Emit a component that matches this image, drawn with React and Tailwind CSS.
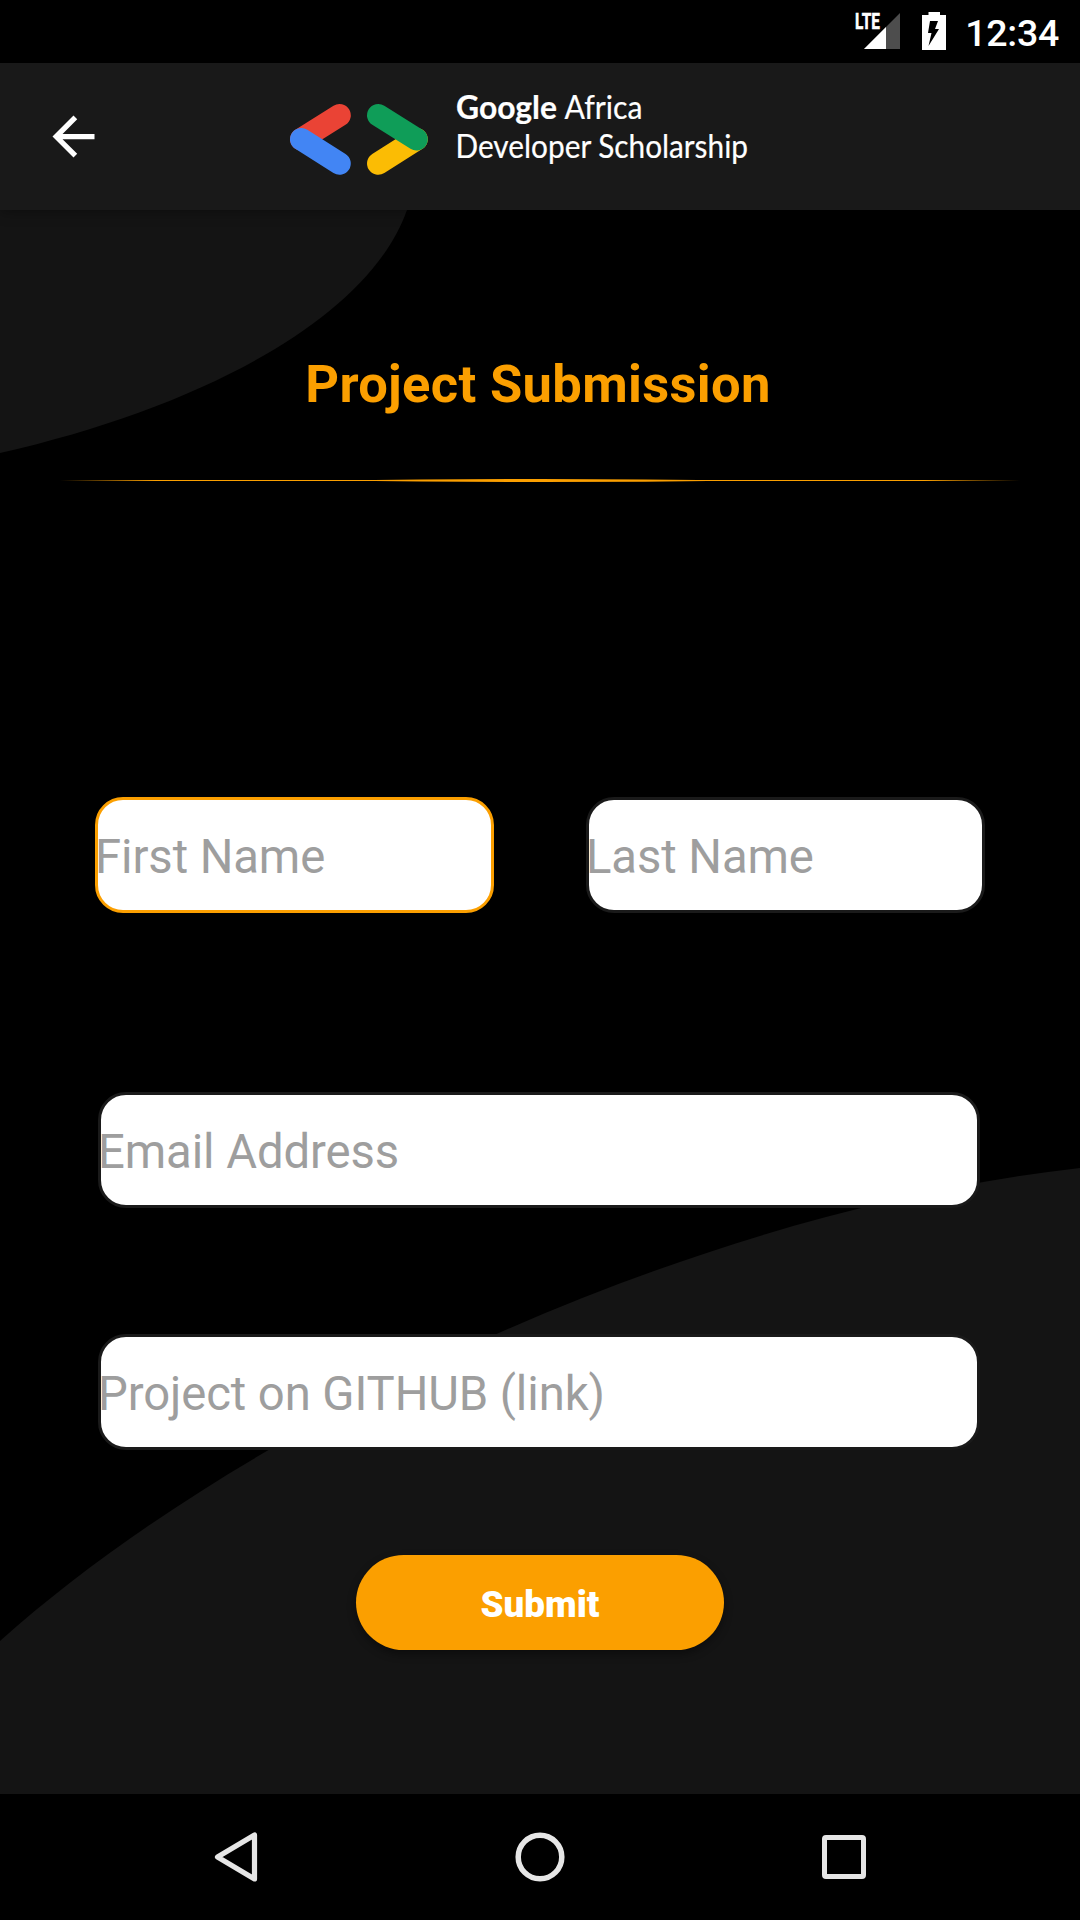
function StatusBar() {
  return (
    <div className="flex h-[63px] shrink-0 items-start justify-end bg-black pr-[21px] text-white">
      <svg className="mt-[8px] h-[45px] w-[52px]" viewBox="0 0 52 45">
        <text x="4" y="21" fontSize="22.500" fontWeight="800" fill="#fff" stroke="#fff" strokeWidth="0.300" fontFamily="Roboto, sans-serif" textLength="25" lengthAdjust="spacingAndGlyphs">LTE</text>
        <path d="M49 5V41H13Z" fill="#4d4d4d" />
        <path d="M35 19V41H13Z" fill="#fff" />
      </svg>
      <svg className="mt-[12px] ml-[19px] h-[38px] w-[24px]" viewBox="0 0 24 38">
        <path d="M6.500 0H18V3H24V38H0V3H6.500Z" fill="#fff" />
        <path d="M8 9H16L13 17H17L6.500 34L9.500 21H6Z" fill="#000" />
      </svg>
      <span className="ml-[19px] mt-[10px] text-[37.5px] leading-[46px] font-medium tracking-[-0.3px]">12:34</span>
    </div>
  );
}

function Logo() {
  return (
    <svg className="ml-[180px] h-[147px] w-[480px]" viewBox="285 63 480 147" fill="none">
      <g strokeWidth="22.6" strokeLinecap="round">
        <path d="M301.300 139.300L339.500 115.300" stroke="#ea4335" />
        <path d="M301.300 139.300L339.500 163.500" stroke="#4285f4" />
        <path d="M416.500 139.300L378.300 163.500" stroke="#fbbc04" />
        <path d="M416.500 139.300L378.300 115.300" stroke="#0f9d58" />
      </g>
      <g fill="#fff" stroke="#fff" strokeWidth="0.200" fontSize="32" fontFamily="Lato, sans-serif">
        <text x="456" y="119.300" fontWeight="700" textLength="101" lengthAdjust="spacingAndGlyphs">Google</text>
        <text x="564.500" y="119.300" textLength="78" lengthAdjust="spacingAndGlyphs">Africa</text>
        <text x="455.500" y="157.700" textLength="292.500" lengthAdjust="spacingAndGlyphs">Developer Scholarship</text>
      </g>
    </svg>
  );
}

function AppBar() {
  return (
    <header className="relative z-10 flex h-[147px] shrink-0 items-center bg-[#191919] pl-[42px] shadow-[0_2px_12px_rgba(0,0,0,0.35)]">
      <svg className="h-[63px] w-[63px]" viewBox="0 0 24 24" fill="#fff">
        <path d="M20 11H7.830l5.590-5.590L12 4l-8 8 8 8 1.410-1.410L7.830 13H20v-2z" />
      </svg>
      <Logo />
    </header>
  );
}

function Backdrop() {
  return (
    <svg className="absolute inset-0 h-full w-full" viewBox="0 210 1080 1584" fill="#141414">
      <path d="M0 210H407C370 315 210 405 0 453Z" />
      <path d="M0 1641C235 1430 680 1213 1080 1168V1794H0Z" />
    </svg>
  );
}

function Divider() {
  return (
    <svg className="mt-[62px] h-[6px] w-[960px] self-center" viewBox="0 0 960 6">
      <defs>
        <linearGradient id="rule" x1="0" x2="1" y1="0" y2="0">
          <stop offset="0" stopColor="#fb9f00" stopOpacity="0" />
          <stop offset="0.100" stopColor="#fb9f00" />
          <stop offset="0.900" stopColor="#fb9f00" />
          <stop offset="1" stopColor="#fb9f00" stopOpacity="0" />
        </linearGradient>
      </defs>
      <rect x="0" y="3" width="960" height="1" fill="url(#rule)" />
      <path d="M270 3.500Q480 0.500 690 3.500Q480 6.500 270 3.500Z" fill="#fb9f00" />
    </svg>
  );
}

function Field({ label, className }) {
  return (
    <input
      placeholder={label}
      className={"h-[116px] rounded-[28px] border-[3px] bg-white pt-[4px] indent-[-3px] text-[47.25px] leading-[56px] tracking-[-0.09px] text-black outline-none placeholder:text-[#9e9e9e] placeholder:opacity-100 " + className}
    />
  );
}

function NavBar() {
  return (
    <nav className="flex h-[126px] shrink-0 items-center justify-between bg-black px-[206px]">
      <svg className="h-[60px] w-[60px]" viewBox="0 0 60 60" fill="none" stroke="#e6e6e6" strokeWidth="5.200" strokeLinejoin="round">
        <path d="M48.500 7.900V51.900L11.500 30Z" />
      </svg>
      <svg className="h-[60px] w-[60px]" viewBox="0 0 60 60" fill="none" stroke="#e6e6e6" strokeWidth="5.500">
        <circle cx="30" cy="30" r="21.800" />
      </svg>
      <svg className="h-[60px] w-[60px]" viewBox="0 0 60 60" fill="none" stroke="#e6e6e6" strokeWidth="5">
        <rect x="10.500" y="10.500" width="39" height="39" rx="1.500" />
      </svg>
    </nav>
  );
}

export default function App() {
  return (
    <div className="flex h-[1920px] w-[1080px] flex-col overflow-hidden bg-black font-['Roboto',sans-serif]">
      <StatusBar />
      <AppBar />
      <main className="relative flex-1">
        <Backdrop />
        <div className="relative flex flex-col">
          <h1 className="mt-[143px] -translate-x-[2px] text-center text-[52.5px] leading-[62px] font-bold tracking-[0.33px] text-[#fb9f00]">Project Submission</h1>
          <Divider />
          <div className="mt-[314px] flex gap-[92px] pl-[95px]">
            <Field label="First Name" className="w-[399px] border-[#fb9f00]" />
            <Field label="Last Name" className="w-[399px] border-[#1a1a1a]" />
          </div>
          <Field label="Email Address" className="mt-[179px] ml-[98px] w-[882px] border-[#1a1a1a]" />
          <Field label="Project on GITHUB (link)" className="mt-[126px] ml-[98px] w-[882px] border-[#1a1a1a]" />
          <button className="mt-[105px] h-[95px] w-[368px] self-center rounded-full bg-[#fb9f00] pt-[4px] text-[36.75px] leading-[44px] font-black text-white shadow-[0_4px_8px_rgba(0,0,0,0.4)]">
            Submit
          </button>
        </div>
      </main>
      <NavBar />
    </div>
  );
}
